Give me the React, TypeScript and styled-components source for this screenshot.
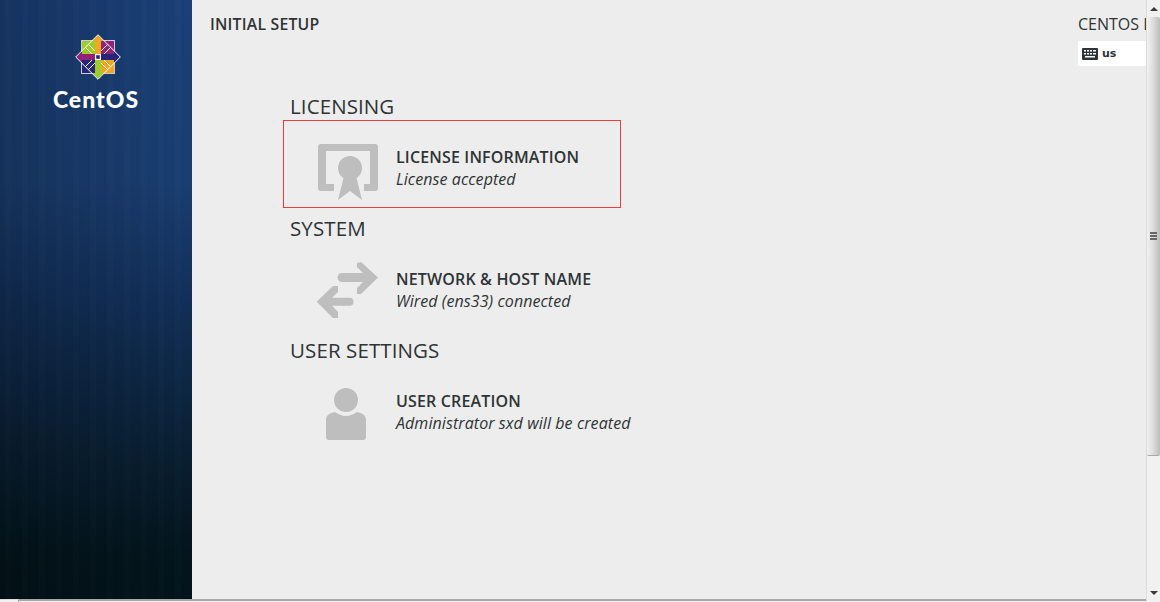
import React from "react";
import styled, { createGlobalStyle } from "styled-components";

const GlobalStyle = createGlobalStyle`
  html, body {
    margin: 0;
    padding: 0;
    height: 100%;
    overflow: hidden;
    background: #ededed;
    font-family: "Open Sans", "Noto Sans", sans-serif;
    color: #2e3436;
  }
`;

const Screen = styled.div`
  width: 1160px;
  height: 602px;
  display: flex;
  flex-direction: column;
  overflow: hidden;
`;

const Top = styled.div`
  display: flex;
  height: 599px;
`;

const Sidebar = styled.aside`
  width: 192px;
  flex: none;
  display: flex;
  flex-direction: column;
  align-items: center;
  padding: 34px 0 0 3px;
  box-sizing: border-box;
  background:
    repeating-linear-gradient(90deg, rgba(0, 0, 0, 0.025) 0 5px, rgba(255, 255, 255, 0.006) 5px 11px, rgba(0, 0, 0, 0.015) 11px 17px),
    linear-gradient(90deg, rgba(0, 0, 0, 0.2), rgba(0, 0, 0, 0) 100%),
    linear-gradient(180deg, #1b4079 0%, #1a3f73 30%, #12305a 50%, #0a2238 72%, #03151d 92%, #02141b 100%);
`;

const Wordmark = styled.div`
  margin-top: 6px;
  margin-left: -3px;
  font-family: "Lato", sans-serif;
  font-weight: 900;
  font-size: 23px;
  line-height: 26px;
  letter-spacing: 1px;
  color: #fff;
`;

const Main = styled.main`
  flex: 1;
  min-width: 0;
  position: relative;
  overflow: hidden;
  display: flex;
  flex-direction: column;
`;

const Header = styled.header`
  display: flex;
  justify-content: space-between;
  padding: 14px 0 0 18px;
  height: 86px;
  box-sizing: border-box;
`;

const PageTitle = styled.div`
  font-size: 15.8px;
  line-height: 20px;
  font-weight: 600;
  letter-spacing: 0.2px;
`;

const Distro = styled.div`
  width: 68px;
  flex: none;
  display: flex;
  flex-direction: column;
`;

const DistroName = styled.div`
  font-size: 16px;
  line-height: 20px;
  white-space: nowrap;
`;

const Layout = styled.div`
  margin-top: 7px;
  height: 25px;
  background: #fff;
  display: flex;
  align-items: center;
  gap: 4px;
  padding-left: 4px;
  font-family: "DejaVu Sans", sans-serif;
  font-size: 11px;
  font-weight: 700;
`;

const Hubs = styled.div`
  padding-left: 91px;
`;

const Heading = styled.h2`
  margin: 0;
  height: 34px;
  padding: 7px 0 0 7px;
  box-sizing: border-box;
  font-size: 20.5px;
  line-height: 26px;
  font-weight: 400;
  letter-spacing: 0.1px;
`;

const Spoke = styled.div<{ $selected?: boolean }>`
  width: 338px;
  height: 88px;
  box-sizing: border-box;
  border: 1px solid ${(p) => (p.$selected ? "#f23a3a" : "transparent")};
  display: flex;
  align-items: center;
`;

const SpokeIcon = styled.svg`
  width: 112px;
  height: 88px;
  flex: none;
`;

const SpokeText = styled.div`
  display: flex;
  flex-direction: column;
  gap: 2px;
  margin-top: 7px;
  white-space: nowrap;
`;

const SpokeTitle = styled.div`
  font-size: 16px;
  line-height: 20px;
  font-weight: 600;
  letter-spacing: 0.16px;
`;

const SpokeStatus = styled.div`
  font-size: 16px;
  line-height: 20px;
  font-style: italic;
  letter-spacing: 0.08px;
`;

const VScroll = styled.div`
  width: 14px;
  flex: none;
  height: 602px;
  box-sizing: border-box;
  border-left: 1px solid #dcdcdc;
  background: #f1f1f1;
  display: flex;
  flex-direction: column;
  align-items: center;
`;

const ArrowUp = styled.div`
  width: 0;
  height: 0;
  margin-top: 7px;
  border-left: 4px solid transparent;
  border-right: 4px solid transparent;
  border-bottom: 4px solid #3a3a3a;
`;

const Thumb = styled.div`
  margin-top: 6px;
  width: 100%;
  height: 439px;
  flex: none;
  box-sizing: border-box;
  border-radius: 2px;
  border-bottom: 1px solid #a8a8a8;
  background: linear-gradient(90deg, #f2f2f2 0%, #dedede 45%, #bdbdbd 100%);
  display: flex;
  flex-direction: column;
  justify-content: center;
  align-items: center;
  gap: 1px;
`;

const Grip = styled.span`
  display: block;
  width: 7px;
  height: 2px;
  background: #666;
`;

const ArrowDown = styled.div`
  width: 0;
  height: 0;
  margin-top: auto;
  margin-bottom: 7px;
  border-left: 4px solid transparent;
  border-right: 4px solid transparent;
  border-top: 4px solid #3a3a3a;
`;

const HScroll = styled.div`
  height: 3px;
  display: flex;
  width: 1146px;
`;

const HStub = styled.div`
  width: 18px;
  background: #f1f1f1;
  border-top: 1px solid #dcdcdc;
  border-right: 1px solid #a8a8a8;
`;

const HBar = styled.div`
  flex: 1;
  background: #f0f0f0;
  border-top: 2px solid #a8a8a8;
`;

function Logo() {
  return (
    <svg width="46" height="46" viewBox="0 0 46 46" style={{ flex: "none" }}>
      <rect x="6" y="6" width="34" height="34" fill="#c9c9dc" />
      <rect x="7" y="7" width="15" height="15" fill="#9ccd2a" />
      <rect x="24" y="7" width="15" height="15" fill="#932279" />
      <rect x="7" y="24" width="15" height="15" fill="#262577" />
      <rect x="24" y="24" width="15" height="15" fill="#efa724" />
      <polygon points="23,1 29,7 26,7 26,20 20,20 20,7 17,7" fill="#efa724" />
      <polygon points="45,23 39,29 39,26 26,26 26,20 39,20 39,17" fill="#262577" />
      <polygon points="23,45 17,39 20,39 20,26 26,26 26,39 29,39" fill="#9ccd2a" />
      <polygon points="1,23 7,17 7,20 20,20 20,26 7,26 7,29" fill="#932279" />
      <g fill="none" stroke="#fff" strokeWidth="1">
        <polygon points="23,0.7 45.3,23 23,45.3 0.7,23" />
        <path d="M20 17 L13 10 M29 20 L36 13 M26 29 L33 36 M17 26 L10 33" />
        <path d="M26 17 L33 10 M29 26 L36 33 M20 29 L13 36 M17 20 L10 13" />
      </g>
      <rect x="20" y="20" width="6" height="6" fill="#fff" />
      <rect x="21.2" y="21.2" width="3.6" height="3.6" fill="#262577" />
    </svg>
  );
}

function KeyboardIcon() {
  return (
    <svg width="16" height="12" viewBox="0 0 16 12">
      <rect width="16" height="12" rx="1" fill="#2e3436" />
      <g fill="#fff">
        <rect x="2" y="2" width="2" height="1.5" />
        <rect x="5" y="2" width="2" height="1.5" />
        <rect x="8" y="2" width="2" height="1.5" />
        <rect x="11" y="2" width="3" height="1.5" />
        <rect x="2" y="5" width="2" height="1.5" />
        <rect x="5" y="5" width="2" height="1.5" />
        <rect x="8" y="5" width="2" height="1.5" />
        <rect x="11" y="5" width="3" height="1.5" />
        <rect x="3" y="8" width="10" height="1.5" />
      </g>
    </svg>
  );
}

// icons are drawn in the row's own box: 112x88, origin 1px in from the border
function LicenseIcon() {
  return (
    <SpokeIcon viewBox="0 0 112 88" fill="#bebebe">
      <path d="M37 24h54a3 3 0 0 1 3 3v41a3 3 0 0 1-3 3H80v-7h6V31H42v33h8v7H37a3 3 0 0 1-3-3V27a3 3 0 0 1 3-3z" />
      <circle cx="66" cy="48" r="12" />
      <polygon points="60,56 72,56 78,80 66,71 54,80" />
    </SpokeIcon>
  );
}

function NetworkIcon() {
  return (
    <SpokeIcon viewBox="0 0 112 88" fill="#bebebe">
      <path d="M58 31H79L73 25V21L77 20L94 35.5L77 52H73V46L79 40H58a4.5 4.5 0 0 1 0-9z" />
      <path d="M65.5 55.7H48L54 50V44H49L32.7 59.7L49 76H54V70L48 63.7H65.5a4 4 0 0 0 0-8z" />
    </SpokeIcon>
  );
}

function UserIcon() {
  return (
    <SpokeIcon viewBox="0 0 112 88" fill="#bebebe">
      <circle cx="62" cy="36" r="12" />
      <path d="M42 56c0-5 4-7 9-8 3 2 7 4 11 4s8-2 11-4c5 1 9 3 9 8v17a3 3 0 0 1-3 3H45a3 3 0 0 1-3-3z" />
    </SpokeIcon>
  );
}

export default function App() {
  return (
    <Screen>
      <GlobalStyle />
      <Top>
        <Sidebar>
          <Logo />
          <Wordmark>CentOS</Wordmark>
        </Sidebar>
        <Main>
          <Header>
            <PageTitle>INITIAL SETUP</PageTitle>
            <Distro>
              <DistroName>CENTOS LINUX 7 (CORE)</DistroName>
              <Layout>
                <KeyboardIcon />
                us
              </Layout>
            </Distro>
          </Header>
          <Hubs>
            <Heading>LICENSING</Heading>
            <Spoke $selected>
              <LicenseIcon />
              <SpokeText>
                <SpokeTitle>LICENSE INFORMATION</SpokeTitle>
                <SpokeStatus>License accepted</SpokeStatus>
              </SpokeText>
            </Spoke>
            <Heading>SYSTEM</Heading>
            <Spoke>
              <NetworkIcon />
              <SpokeText>
                <SpokeTitle>NETWORK &amp; HOST NAME</SpokeTitle>
                <SpokeStatus>Wired (ens33) connected</SpokeStatus>
              </SpokeText>
            </Spoke>
            <Heading>USER SETTINGS</Heading>
            <Spoke>
              <UserIcon />
              <SpokeText>
                <SpokeTitle>USER CREATION</SpokeTitle>
                <SpokeStatus>Administrator sxd will be created</SpokeStatus>
              </SpokeText>
            </Spoke>
          </Hubs>
        </Main>
        <VScroll>
          <ArrowUp />
          <Thumb>
            <Grip />
            <Grip />
            <Grip />
          </Thumb>
          <ArrowDown />
        </VScroll>
      </Top>
      <HScroll>
        <HStub />
        <HBar />
      </HScroll>
    </Screen>
  );
}
